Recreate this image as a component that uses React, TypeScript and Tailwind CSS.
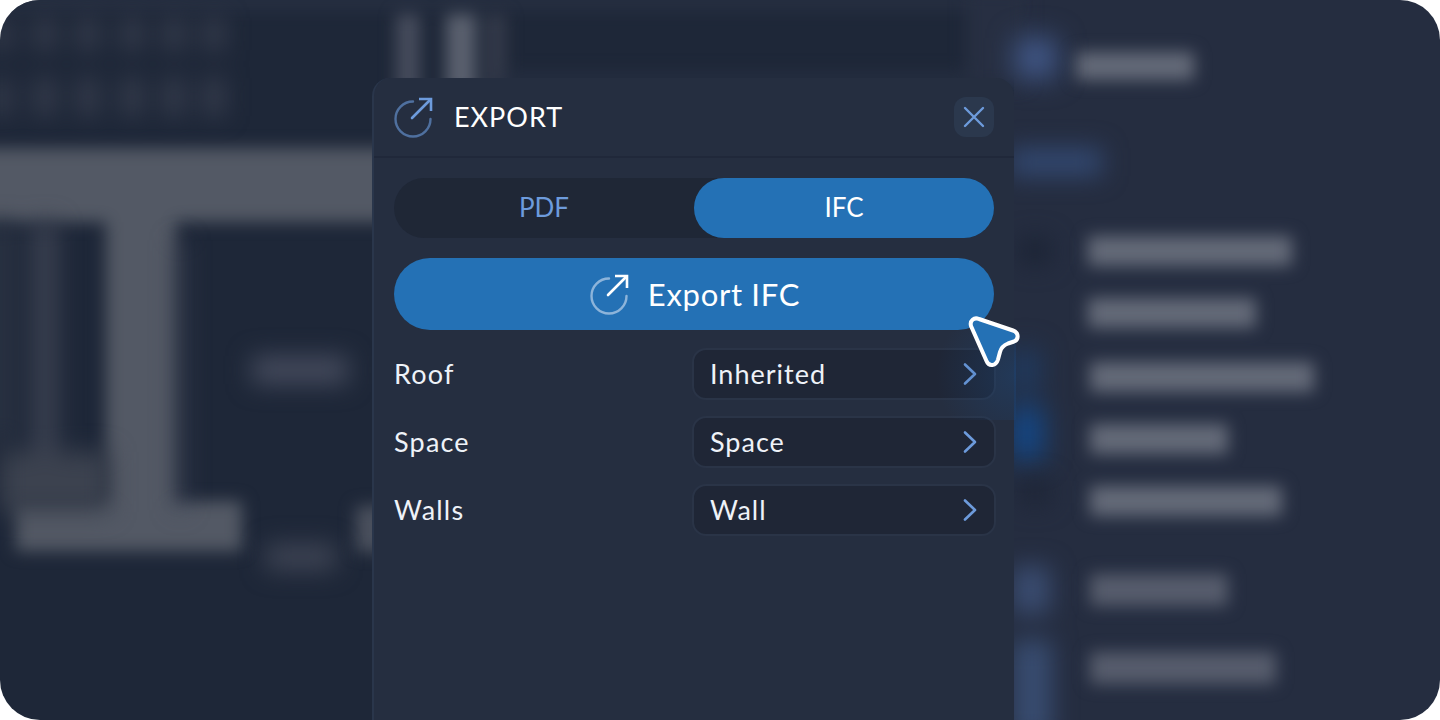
const FONT = "font-['Lato','Open_Sans',sans-serif]";

function ExportIcon({ ring, arrow }: { ring: string; arrow: string }) {
  return (
    <svg width="42" height="42" viewBox="0 0 42 42" fill="none" className="shrink-0">
      <path d="M21 5.5 A17.5 17.5 0 1 0 38.5 23" stroke={ring} strokeWidth="2.4" strokeLinecap="round" />
      <path d="M20 22 L38 4" stroke={arrow} strokeWidth="2.6" strokeLinecap="round" />
      <path d="M27 3 H39 V15" stroke={arrow} strokeWidth="2.6" />
    </svg>
  );
}

function Chevron() {
  return (
    <svg width="14" height="24" viewBox="0 0 14 24" fill="none">
      <path d="M2 2.5 L12 12 L2 21.5" stroke="#6d9bdc" strokeWidth="2.6" strokeLinecap="round" strokeLinejoin="round" />
    </svg>
  );
}

function Backdrop() {
  const gray = "#535965";
  const soft = "#646a78";
  return (
    <svg width="1440" height="720" viewBox="0 0 1440 720" className="absolute inset-0">
      <defs>
        <filter id="b12" x="-60%" y="-60%" width="220%" height="220%" colorInterpolationFilters="sRGB"><feGaussianBlur stdDeviation="12" /></filter>
        <filter id="b8" x="-60%" y="-60%" width="220%" height="220%" colorInterpolationFilters="sRGB"><feGaussianBlur stdDeviation="8" /></filter>
        <filter id="b18" x="-80%" y="-80%" width="260%" height="260%" colorInterpolationFilters="sRGB"><feGaussianBlur stdDeviation="14" /></filter>
      </defs>
      <rect x="0" y="0" width="1014" height="720" fill="#1e2738" />
      <rect x="1014" y="0" width="426" height="720" fill="#252d40" />
      <rect x="0" y="-14" width="1014" height="26" fill="#252e40" filter="url(#b8)" />

      <g filter="url(#b12)" fill="#3a4050">
        {[45, 88, 132, 174, 214].map((x) => (
          <g key={x}>
            <rect x={x - 9} y="18" width="18" height="32" />
            <rect x={x - 9} y="78" width="18" height="38" />
          </g>
        ))}
        <rect x="-6" y="20" width="16" height="30" />
        <rect x="-6" y="80" width="16" height="36" />
      </g>
      <g filter="url(#b8)">
        <rect x="396" y="14" width="24" height="80" fill="#464c5c" />
        <rect x="446" y="14" width="30" height="80" fill="#5a606e" />
        <rect x="486" y="14" width="20" height="80" fill="#343a4a" />
        <rect x="966" y="-10" width="60" height="96" fill="#272f42" />
        <rect x="500" y="72" width="470" height="16" fill="#252e40" />
      </g>

      <g filter="url(#b8)" fill={gray}>
        <rect x="-20" y="148" width="420" height="74" />
        <rect x="106" y="215" width="70" height="300" />
        <rect x="16" y="501" width="226" height="50" />
        <rect x="356" y="506" width="34" height="46" fill="#4a505d" />
      </g>
      <g filter="url(#b12)">
        <rect x="34" y="222" width="22" height="230" fill="#3e4454" />
        <rect x="0" y="452" width="110" height="60" fill="#3c424f" />
        <rect x="-10" y="222" width="22" height="220" fill="#2c3444" />
        <rect x="252" y="356" width="96" height="28" fill="#444a5c" />
        <rect x="266" y="544" width="70" height="26" fill="#3e4454" />
        <rect x="176" y="240" width="8" height="270" fill="#3e4454" />
      </g>

      <g filter="url(#b8)" fill={soft}>
        <rect x="1076" y="52" width="118" height="28" />
        <rect x="1088" y="236" width="204" height="30" />
        <rect x="1088" y="298" width="168" height="30" />
        <rect x="1090" y="362" width="224" height="30" />
        <rect x="1090" y="424" width="138" height="30" />
        <rect x="1090" y="486" width="192" height="30" />
        <rect x="1090" y="574" width="138" height="32" fill="#565c6c" />
        <rect x="1090" y="652" width="186" height="32" fill="#565c6c" />
      </g>
      <g filter="url(#b18)">
        <rect x="1016" y="38" width="40" height="40" fill="#42598a" />
        <rect x="1012" y="406" width="30" height="54" fill="#124a8e" />
        <rect x="1012" y="350" width="26" height="40" fill="#1e3d66" />
      </g>
      <g filter="url(#b12)">
        <rect x="1010" y="148" width="92" height="28" fill="#324870" />
        <rect x="1012" y="566" width="38" height="48" fill="#3a4c70" />
        <rect x="1012" y="640" width="40" height="100" fill="#384c70" />
        <rect x="1020" y="238" width="30" height="26" fill="#1b2334" />
        <rect x="1020" y="480" width="30" height="24" fill="#1d2536" />
      </g>
    </svg>
  );
}

function SelectRow({ label, value }: { label: string; value: string }) {
  return (
    <div className="-mr-0.5 flex items-center justify-between">
      <span className="text-[27px] leading-8 tracking-[1.2px] text-[#eef2f8]">{label}</span>
      <div className="flex h-[52px] w-[304px] items-center justify-between rounded-[14px] border-2 border-[#2a3447] bg-[#1f2636] pl-4 pr-[17px]">
        <span className="text-[27px] leading-8 tracking-[1px] text-[#eef2f8]">{value}</span>
        <Chevron />
      </div>
    </div>
  );
}

export default function App() {
  return (
    <div className={`relative h-[720px] w-[1440px] overflow-hidden bg-white ${FONT}`}>
      <div className="relative h-full w-full overflow-hidden rounded-[40px]">
        <Backdrop />
        <div className="relative pl-[372px] pt-[78px]">
          <div className="h-[642px] w-[642px] rounded-t-[18px] border-l-2 border-[#2a364b] bg-[#252e40]">
            <div className="flex h-[80px] items-center justify-between border-b-2 border-[#20283a] pl-[18px] pr-5">
              <div className="flex items-center gap-5">
                <ExportIcon ring="#4f709f" arrow="#6d9bdc" />
                <span className="text-[27px] leading-8 tracking-[1px] text-white">EXPORT</span>
              </div>
              <div className="flex h-10 w-10 items-center justify-center rounded-[12px] bg-[#2b384d]">
                <svg width="22" height="22" viewBox="0 0 22 22" fill="none">
                  <path d="M2 2 L20 20 M20 2 L2 20" stroke="#6d9bdc" strokeWidth="2.4" strokeLinecap="round" />
                </svg>
              </div>
            </div>
            <div className="flex flex-col px-5 pt-5">
              <div className="flex h-[60px] rounded-full bg-[#1f2736] text-[26px]">
                <div className="flex w-[300px] items-center justify-center pb-0.5 text-[#6d9bdc]">PDF</div>
                <div className="flex w-[300px] items-center justify-center rounded-full bg-[#2471b5] pb-0.5 text-white">IFC</div>
              </div>
              <div className="mt-5 flex h-[72px] items-center justify-center gap-[18px] rounded-full bg-[#2471b5]">
                <ExportIcon ring="#8db4da" arrow="#ffffff" />
                <span className="text-[31px] leading-8 tracking-[0.7px] text-white">Export IFC</span>
              </div>
              <div className="mt-[18px] flex flex-col gap-4">
                <SelectRow label="Roof" value="Inherited" />
                <SelectRow label="Space" value="Space" />
                <SelectRow label="Walls" value="Wall" />
              </div>
            </div>
          </div>
        </div>
        <div className="absolute left-[920px] top-[330px] h-[90px] w-[96px] rounded-l-full bg-[radial-gradient(circle_at_right,rgba(28,80,140,0.32),rgba(28,80,140,0)_75%)]" />
        <svg width="54" height="54" viewBox="0 0 54 54" fill="none" className="absolute left-[967px] top-[315px]">
          <path
            d="M4 11 C2.5 5.5 7 2 12 4 L46 15.5 C52 17.5 52 24.5 47 26.5 L41 28.5 C36 30.5 34 33 33 37 L31 44.5 C29 51 22 52 19.5 46 Z"
            fill="#2471b5"
            stroke="#ffffff"
            strokeWidth="4"
            strokeLinejoin="round"
          />
        </svg>
      </div>
    </div>
  );
}
